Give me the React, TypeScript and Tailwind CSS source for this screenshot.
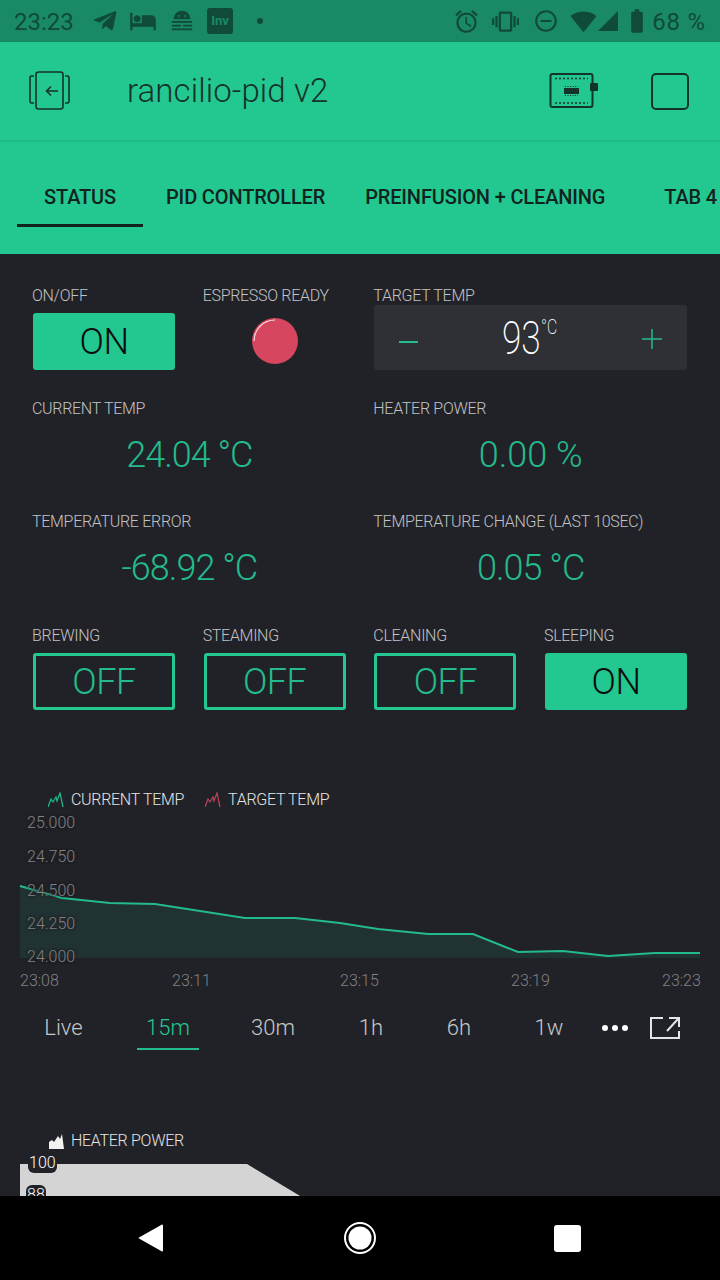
import { FaTelegramPlane } from "react-icons/fa";
import {
  MdAccessAlarm,
  MdBatteryStd,
  MdHotel,
  MdRemoveCircleOutline,
  MdSignalCellular4Bar,
  MdSignalWifi4Bar,
  MdVibration,
} from "react-icons/md";

const linePoints =
  "20,886 62,898 110,903 155,904 245,918 295,918 340,923 378,929 428,934 473,934 518,952 563,951 608,956 655,953 700,953";

const Label = ({ children }: { children: string }) => (
  <div className="-ml-px h-[19px] whitespace-nowrap text-[16px] leading-5 font-light tracking-[-0.3px] text-[#c2c3c6]">
    {children}
  </div>
);

const Value = ({ label, value, tall, tight }: { label: string; value: string; tall?: boolean; tight?: boolean }) => (
  <div className={tall ? "col-span-2 h-[114px]" : "col-span-2 h-[113px]"}>
    <Label>{label}</Label>
    <div
      className={
        tight
          ? "mt-[12px] text-center text-[36px] leading-[50px] font-light tracking-[-1px] text-[#23bb8b]"
          : "mt-[12px] text-center text-[36px] leading-[50px] font-light text-[#23bb8b]"
      }
    >
      {value}
    </div>
  </div>
);

const ToggleButton = ({ label, on }: { label: string; on?: boolean }) => (
  <div>
    <Label>{label}</Label>
    <div
      className={
        on
          ? "mt-2 flex h-[57px] items-center justify-center rounded-[3px] bg-[#23c890] text-[36px] font-light tracking-[-0.5px] text-[#0c0d0f]"
          : "mt-2 flex h-[57px] items-center justify-center rounded-[3px] border-[3px] border-[#23c890] text-[36px] font-light tracking-[-0.5px] text-[#23bb8b]"
      }
    >
      {on ? "ON" : "OFF"}
    </div>
  </div>
);

const StatusBar = () => (
  <div className="flex h-[42px] items-center bg-[#1a8a66] pr-[14px] pl-[14px] text-[#0f4a3b]">
    <span className="mt-[2px] w-[64px] text-[24px]">23:23</span>
    <div className="flex items-center">
      <FaTelegramPlane size={26} className="ml-[14px]" />
      <MdHotel size={28} className="ml-[11px]" />
      <svg width="24" height="26" viewBox="0 0 26 26" className="ml-[13px]" fill="currentColor">
        <path d="M4 10a9 8 0 0 1 18 0v1H4z" />
        <rect x="2" y="13" width="22" height="2" />
        <rect x="2" y="17" width="10" height="2" />
        <rect x="14" y="17" width="10" height="2" />
        <rect x="2" y="21" width="22" height="2" />
        <circle cx="9.500" cy="7.500" r="1" fill="#1a8a66" />
        <circle cx="16.500" cy="7.500" r="1" fill="#1a8a66" />
      </svg>
      <div className="ml-[13px] flex h-[26px] w-[26px] items-center justify-center rounded-[3px] bg-[#0f4a3b] text-[13px] font-bold text-[#1a8a66]">
        Inv
      </div>
      <div className="ml-[24px] h-[6px] w-[6px] rounded-full bg-[#0f4a3b]" />
    </div>
    <div className="ml-auto flex items-center">
      <MdAccessAlarm size={27} />
      <MdVibration size={27} className="ml-[12px]" />
      <MdRemoveCircleOutline size={26} className="ml-[14px]" />
      <MdSignalWifi4Bar size={27} className="ml-[11px]" />
      <MdSignalCellular4Bar size={24} className="-ml-px" />
      <MdBatteryStd size={28} className="ml-[3px]" />
      <span className="mt-[2px] ml-[1px] text-[24px] tracking-[0.8px]">68 %</span>
    </div>
  </div>
);

const Header = () => (
  <div className="relative flex h-[98px] items-center bg-[#23c890] pl-[29px] text-[#14332c] shadow-[0_1px_3px_rgba(0,0,0,0.12)]">
    <svg width="42" height="40" viewBox="0 0 42 40" fill="none" stroke="currentColor" strokeWidth="1.600">
      <rect x="7" y="1" width="27" height="37" rx="2.500" />
      <path d="M5 5H2.500Q1 5 1 7V30Q1 32 2.500 32H5M36 5h2.500Q40 5 40 7V30Q40 32 38.500 32H36" />
      <path d="M29 20H18M22 15.500 17.500 20l4.500 4.500" />
    </svg>
    <span className="ml-[56px] text-[33px] font-light tracking-[0.1px]">rancilio-pid v2</span>
    <svg width="50" height="38" viewBox="0 0 50 38" className="ml-auto" fill="none">
      <rect x="1.500" y="2" width="42" height="33" rx="2" stroke="#14332c" strokeWidth="2" />
      <path d="M6 6.500h33M6 31h33" stroke="#14332c" strokeWidth="1.500" strokeDasharray="2 2" />
      <rect x="15" y="16" width="15" height="6" fill="#14332c" />
      <path d="M16 14.500h13M16 23.500h13" stroke="#14332c" strokeWidth="1" strokeDasharray="1 1.500" />
      <rect x="41" y="11" width="8" height="8" rx="1" fill="#14332c" />
    </svg>
    <div className="mr-[31px] ml-[52px] h-[37px] w-[38px] rounded-[5px] border-2 border-[#14332c]" />
  </div>
);

const Tabs = () => (
  <div className="flex h-[114px] items-end overflow-hidden bg-[#23c890] pl-[17px] text-[20px] font-medium tracking-[-0.15px] whitespace-nowrap text-[#12231f]">
    <div className="mb-[27px] flex h-[62px] w-[126px] flex-none items-center justify-center border-b-[3px] border-[#12231f] pt-[5px]">
      STATUS
    </div>
    <div className="mb-[27px] ml-[23px] flex h-[62px] flex-none items-center pt-[2px]">PID CONTROLLER</div>
    <div className="mb-[27px] ml-[40px] flex h-[62px] flex-none items-center pt-[2px]">PREINFUSION + CLEANING</div>
    <div className="mb-[27px] ml-[59px] flex h-[62px] flex-none items-center pt-[2px]">TAB 4</div>
  </div>
);

const Stepper = () => (
  <div className="col-span-2 h-[113px]">
    <Label>TARGET TEMP</Label>
    <div className="flex h-[65px] items-center justify-between rounded-[3px] bg-[#2f3035] px-[25px]">
      <div className="mt-[9px] h-[2px] w-[19px] bg-[#23bb8b]" />
      <div className="mr-[8px] flex items-start text-white">
        <span className="inline-block origin-right scale-x-[0.75] text-[47px] leading-[54px] font-extralight">93</span>
        <span className="mt-[6px] inline-block origin-left scale-x-[0.75] text-[21px] leading-5 font-extralight">°C</span>
      </div>
      <svg width="20" height="20" viewBox="0 0 20 20" stroke="#23bb8b" strokeWidth="1.500" className="mt-[3px]">
        <path d="M0 10H20M10 0V20" />
      </svg>
    </div>
  </div>
);

const Led = () => (
  <div>
    <Label>ESPRESSO READY</Label>
    <div className="flex h-[72px] items-center justify-center">
      <svg width="48" height="48" viewBox="0 0 48 48">
        <circle cx="24" cy="24" r="23" fill="#d6465f" />
        <path d="M3 24A21 21 0 0 1 24 3" stroke="#f8e4e8" strokeWidth="1.200" fill="none" />
      </svg>
    </div>
  </div>
);

const AxisLabel = ({ children, top }: { children: string; top: number }) => (
  <span
    className="absolute left-[27px] text-[16px] leading-5 font-light text-[#808185] [text-shadow:0_0_2px_#212227,0_0_2px_#212227,0_0_3px_#212227]"
    style={{ top }}
  >
    {children}
  </span>
);

const TempChart = () => (
  <div>
    <div className="flex h-5 items-center pl-[48px] text-[16px] font-light tracking-[-0.3px] text-[#e4e5e6]">
      <svg width="16" height="16" viewBox="0 0 16 16" fill="none" stroke="#23bb8b" strokeWidth="1.200">
        <path d="M0 15 3 7l2 3 3-5 1 4 3-8 3 14" />
      </svg>
      <span className="ml-[7px]">CURRENT TEMP</span>
      <svg width="16" height="16" viewBox="0 0 16 16" fill="none" stroke="#c2415a" strokeWidth="1.200" className="ml-[21px]">
        <path d="M0 15 3 7l2 3 3-5 1 4 3-8 3 14" />
      </svg>
      <span className="ml-[7px]">TARGET TEMP</span>
    </div>
    <div className="relative mt-[3px] h-[147px]">
      <svg width="720" height="147" viewBox="0 813 720 147" className="absolute top-0 left-0">
        <polygon points={`${linePoints} 700,958 20,958`} fill="#23c890" fillOpacity="0.1" />
        <polyline points={linePoints} fill="none" stroke="#23bb8b" strokeWidth="2" />
      </svg>
      <AxisLabel top={0}>25.000</AxisLabel>
      <AxisLabel top={34}>24.750</AxisLabel>
      <AxisLabel top={68}>24.500</AxisLabel>
      <AxisLabel top={101}>24.250</AxisLabel>
      <AxisLabel top={134}>24.000</AxisLabel>
    </div>
    <div className="mt-[11px] flex h-5 pl-[20px] text-[16px] leading-5 font-light text-[#808185]">
      <span className="w-[152px]">23:08</span>
      <span className="w-[168px]">23:11</span>
      <span className="w-[171px]">23:15</span>
      <span className="w-[151px]">23:19</span>
      <span>23:23</span>
    </div>
  </div>
);

const RangeTabs = () => {
  const ranges = [
    { name: "Live", w: "w-[103px]" },
    { name: "15m", w: "w-[106px]" },
    { name: "30m", w: "w-[104px]" },
    { name: "1h", w: "w-[92px]" },
    { name: "6h", w: "w-[84px]" },
    { name: "1w", w: "w-[96px]" },
  ];
  return (
    <div className="mt-[15px] flex h-[50px] items-start pl-[12px] text-[22px] leading-[44px] font-light text-[#c6c7c9]">
      {ranges.map((r) => (
        <div key={r.name} className={`relative text-center ${r.w} ${r.name === "15m" ? "text-[#23c890]" : ""}`}>
          {r.name}
          {r.name === "15m" && <div className="absolute top-[42px] left-[22px] h-[2px] w-[62px] bg-[#23bb8b]" />}
        </div>
      ))}
      <div className="flex h-[44px] w-[36px] items-center justify-center gap-[4px]">
        <div className="h-[6px] w-[6px] rounded-full bg-white" />
        <div className="h-[6px] w-[6px] rounded-full bg-white" />
        <div className="h-[6px] w-[6px] rounded-full bg-white" />
      </div>
      <svg width="30" height="22" viewBox="0 0 30 22" className="mt-[11px] ml-[17px]" fill="none" stroke="#e4e5e6" strokeWidth="2">
        <path d="M13 1H1V21H29V14M17 14 28 2M19 1H29V10" />
      </svg>
    </div>
  );
};

const HeaterChart = () => (
  <div className="mt-[75px]">
    <div className="flex h-5 items-center pl-[49px] text-[16px] font-light tracking-[-0.3px] text-[#e4e5e6]">
      <svg width="15" height="15" viewBox="0 0 15 15" fill="#f2f2f2">
        <path d="M0 15V8l3-2 2 2 4-6 2 3 2-5 2 15z" />
      </svg>
      <span className="ml-[7px]">HEATER POWER</span>
    </div>
    <div className="relative mt-[9px] h-[60px]">
      <svg width="720" height="60" viewBox="0 0 720 60" className="absolute top-0 left-0">
        <polygon points="20,4 247,4 340,60 20,60" fill="#d4d4d4" />
      </svg>
      <span className="absolute top-[-7px] left-[28px] rounded-[6px] bg-[#212227] px-[1px] text-[16px] leading-5 font-light text-white">
        100
      </span>
      <span className="absolute top-[25px] left-[26px] rounded-[6px] bg-[#212227] px-[1px] text-[16px] leading-5 font-light text-white">
        88
      </span>
    </div>
  </div>
);

const NavBar = () => (
  <div className="relative z-10 flex h-[84px] flex-none items-center bg-black">
    <svg width="26" height="30" viewBox="0 0 26 30" className="ml-[138px]" fill="white">
      <path d="M24 1.500Q25 1 25 3V27Q25 29 24 28.500L1 15.500Q0 15 1 14.500Z" />
    </svg>
    <svg width="32" height="32" viewBox="0 0 32 32" className="ml-[180px]">
      <circle cx="16" cy="16" r="15" fill="none" stroke="white" strokeWidth="2" />
      <circle cx="16" cy="16" r="11.500" fill="white" />
    </svg>
    <div className="ml-[178px] h-[27px] w-[27px] rounded-[3px] bg-white" />
  </div>
);

export default function App() {
  return (
    <div className="flex h-[1280px] w-[720px] flex-col overflow-hidden bg-[#212227] font-['Roboto',sans-serif]">
      <StatusBar />
      <Header />
      <Tabs />
      <div className="min-h-0 flex-1 overflow-hidden pt-[32px]">
        <div className="grid grid-cols-4 gap-x-[28.67px] px-[33px]">
          <div className="h-[113px]">
            <ToggleButton label="ON/OFF" on />
          </div>
          <Led />
          <Stepper />
          <Value label="CURRENT TEMP" value="24.04 °C" tight />
          <Value label="HEATER POWER" value="0.00 %" />
          <Value label="TEMPERATURE ERROR" value="-68.92 °C" tall tight />
          <Value label="TEMPERATURE CHANGE (LAST 10SEC)" value="0.05 °C" tall tight />
          <ToggleButton label="BREWING" />
          <ToggleButton label="STEAMING" />
          <ToggleButton label="CLEANING" />
          <ToggleButton label="SLEEPING" on />
        </div>
        <div className="mt-[80px]">
          <TempChart />
          <RangeTabs />
          <HeaterChart />
        </div>
      </div>
      <NavBar />
    </div>
  );
}
